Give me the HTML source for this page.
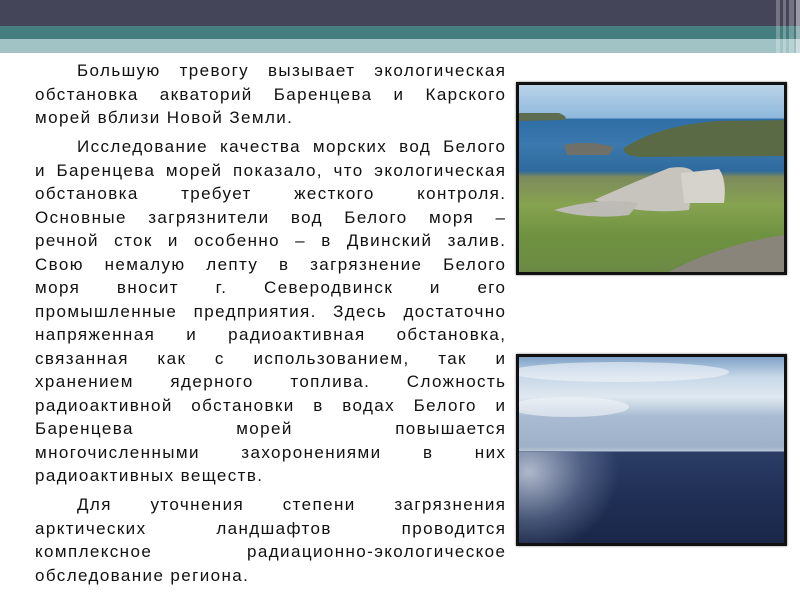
<!DOCTYPE html>
<html><head><meta charset="utf-8"><style>
body{margin:0;width:800px;height:600px;background:#fff;position:relative;overflow:hidden;font-family:"Liberation Sans","DejaVu Sans",sans-serif;}
.b1{position:absolute;left:0;top:0;width:800px;height:26px;background:#454559}
.b2{position:absolute;left:0;top:26px;width:800px;height:13px;background:#467d7f}
.b3{position:absolute;left:0;top:39px;width:800px;height:14px;background:#a2c3c5}
.st{position:absolute;top:0;height:53px;background:rgba(255,255,255,.25)}
.t{position:absolute;left:35px;width:470px;font-size:17px;letter-spacing:1.4px;color:#111;}
.l{height:23.5px;line-height:23.5px;text-align:justify;text-align-last:justify;white-space:nowrap;margin-right:-1.4px}
.l.e{text-align-last:left}
.i{padding-left:42px}
.p{margin-bottom:5.5px}
.img{position:absolute;left:516px;width:265px;border:3px solid #111;box-shadow:0 0 2px #777;}
</style></head><body>
<div class="b1"></div><div class="b2"></div><div class="b3"></div>
<div class="st" style="left:776px;width:4px"></div>
<div class="st" style="left:783px;width:3px"></div>
<div class="st" style="left:789px;width:5px"></div>
<div class="st" style="left:796px;width:4px;background:rgba(255,255,255,.45)"></div>

<div class="t" style="top:59px">
<div class="p">
<div class="l i">Большую тревогу вызывает экологическая</div>
<div class="l">обстановка акваторий Баренцева и Карского</div>
<div class="l e">морей вблизи Новой Земли.</div>
</div>
<div class="p">
<div class="l i">Исследование качества морских вод Белого</div>
<div class="l">и Баренцева морей показало, что экологическая</div>
<div class="l">обстановка требует жесткого контроля.</div>
<div class="l">Основные загрязнители вод Белого моря –</div>
<div class="l">речной сток и особенно – в Двинский залив.</div>
<div class="l">Свою немалую лепту в загрязнение Белого</div>
<div class="l">моря вносит г. Северодвинск и его</div>
<div class="l">промышленные предприятия. Здесь достаточно</div>
<div class="l">напряженная и радиоактивная обстановка,</div>
<div class="l">связанная как с использованием, так и</div>
<div class="l">хранением ядерного топлива. Сложность</div>
<div class="l">радиоактивной обстановки в водах Белого и</div>
<div class="l">Баренцева морей повышается</div>
<div class="l">многочисленными захоронениями в них</div>
<div class="l e">радиоактивных веществ.</div>
</div>
<div class="p">
<div class="l i">Для уточнения степени загрязнения</div>
<div class="l">арктических ландшафтов проводится</div>
<div class="l">комплексное радиационно-экологическое</div>
<div class="l e">обследование региона.</div>
</div>
</div>

<div class="img" style="top:82px;height:187px;background:linear-gradient(#b9d3e8 0,#8fb8dc 33px,#2f6ea6 34px,#3a78ae 60px,#2e6a9c 86px,#7d8a5c 92px,#86a350 120px,#6f9240 150px,#6c8a45 187px)">
<svg width="265" height="187" style="position:absolute;left:0;top:0">
<path d="M105 63 Q140 40 200 36 L265 35 L265 71 L120 72 Q103 70 105 63Z" fill="#5a6a45"/>
<path d="M0 28 L40 28 Q50 32 45 35 L0 36Z" fill="#5e6c50"/>
<path d="M75 115 Q120 95 150 83 Q170 80 175 88 L170 125 Q120 130 75 115Z" fill="#c7c4bd"/>
<path d="M162 88 L200 84 Q208 95 205 118 L165 118Z" fill="#d6d3cc"/>
<path d="M35 125 Q80 112 120 118 L110 130 Q70 135 35 125Z" fill="#bdbbb5"/>
<path d="M150 187 Q200 160 265 150 L265 187Z" fill="#8a857a"/>
<path d="M45 60 Q70 55 95 62 L90 70 L48 70Z" fill="#6f7068"/>
</svg>
</div>

<div class="img" style="top:354px;height:186px;background:linear-gradient(#7fa2c8 0,#c8d8e8 20px,#dfe8f0 40px,#a8bbd2 60px,#9fb1c8 90px,#b8c6d6 94px,#2c3d66 95px,#1f2f55 140px,#1a2748 186px)">
<div style="position:absolute;left:0;top:95px;width:265px;height:91px;background:radial-gradient(ellipse 90px 80px at 10px 20px,rgba(220,228,240,.75),rgba(150,165,195,.35) 60%,rgba(0,0,0,0))"></div>
<svg width="265" height="95" style="position:absolute;left:0;top:0">
<ellipse cx="100" cy="15" rx="110" ry="10" fill="#f2f5f9" opacity=".6"/>
<ellipse cx="50" cy="50" rx="60" ry="10" fill="#f2f5f9" opacity=".6"/>
</svg>
</div>
</body></html>
